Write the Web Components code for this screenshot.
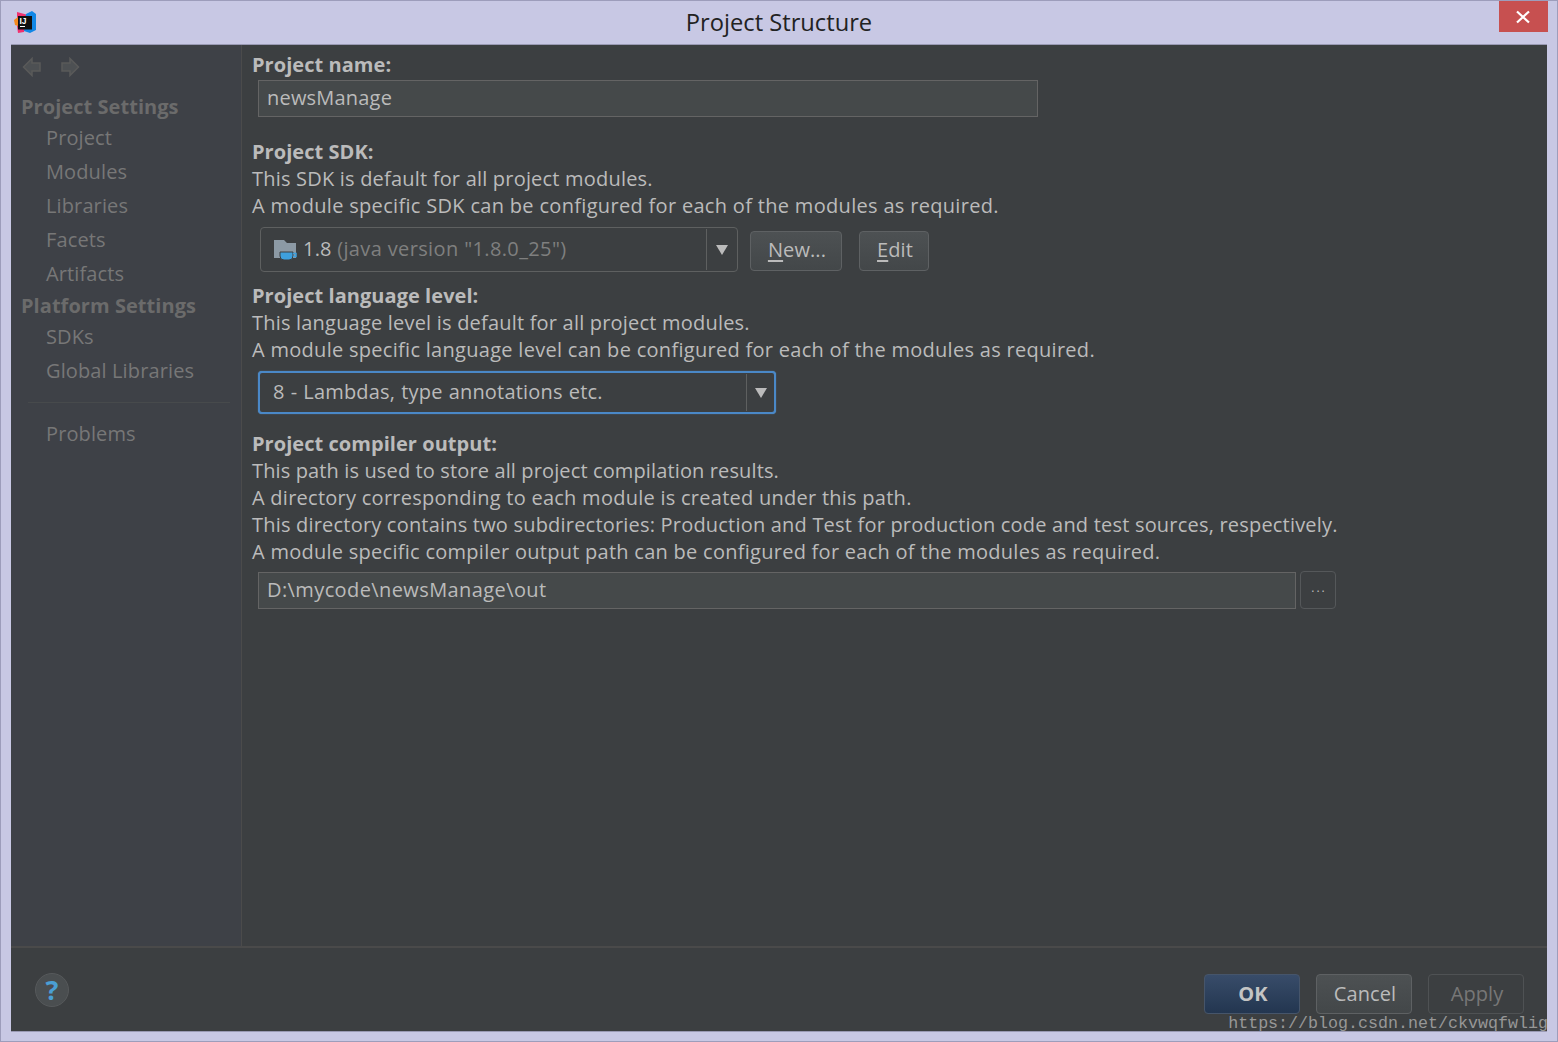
<!DOCTYPE html>
<html>
<head>
<meta charset="utf-8">
<title>Project Structure</title>
<style>
  html, body { margin: 0; height: 100%; background: #c8c8e4; overflow: hidden; }
  body { font: 20px/27px "Open Sans", "Noto Sans", sans-serif; color: #bbbbbb; }
</style>
</head>
<body>
<idea-window>
  <idea-sidebar slot="side"></idea-sidebar>
  <idea-section label="Project name:" slot="main" class="first">
    <idea-field value="newsManage" style="width:780px"></idea-field>
  </idea-section>
  <idea-section label="Project SDK:" slot="main" style="margin-top:21px">
    <div>This SDK is default for all project modules.</div>
    <div style="letter-spacing:.315px">A module specific SDK can be configured for each of the modules as required.</div>
    <idea-sdk-row></idea-sdk-row>
  </idea-section>
  <idea-section label="Project language level:" slot="main" style="margin-top:10px">
    <div>This language level is default for all project modules.</div>
    <div style="letter-spacing:.29px">A module specific language level can be configured for each of the modules as required.</div>
    <idea-combo focused style="margin:8px 0 0 6px;width:518px;height:43px;word-spacing:.6px">8 - Lambdas, type annotations etc.</idea-combo>
  </idea-section>
  <idea-section label="Project compiler output:" slot="main" style="margin-top:16px">
    <div style="letter-spacing:.13px">This path is used to store all project compilation results.</div>
    <div style="letter-spacing:.26px">A directory corresponding to each module is created under this path.</div>
    <div>This directory contains two subdirectories: Production and Test for production code and test sources, respectively.</div>
    <div style="letter-spacing:.27px">A module specific compiler output path can be configured for each of the modules as required.</div>
    <idea-path-row></idea-path-row>
  </idea-section>
</idea-window>

<script>
const FONT = '"Open Sans", "Noto Sans", sans-serif';

class IdeaWindow extends HTMLElement {
  constructor() {
    super();
    this.attachShadow({ mode: 'open' }).innerHTML = `
      <style>
        :host { display: flex; flex-direction: column; position: relative; box-sizing: border-box;
          width: 1558px; height: 1042px; background: #c8c8e4; border: 1px solid #9d9dbb; font-family: ${FONT}; }
        .title { display: flex; align-items: center; justify-content: center; height: 43px; flex: none;
          position: relative; font-size: 23.7px; color: #222; box-sizing: border-box; }
        .logo { position: absolute; left: 13px; top: 10px; }
        .close { position: absolute; right: 9px; top: 0; width: 49px; height: 31px; background: #c75050;
          display: flex; align-items: center; justify-content: center; padding-right: 2px; box-sizing: border-box; }
        .frame { flex: 1; display: flex; flex-direction: column; margin: 0 10px 9px 10px; background: #3c3f41;
          border: 1px solid #9a9ab4; border-width: 1px 0 1px 0; min-height: 0; }
        .body { flex: 1; display: flex; min-height: 0; }
        .main { flex: 1; padding: 6px 0 0 10px; min-width: 0; }
        .foot { height: 85px; flex: none; border-top: 2px solid #4a4a4a; box-sizing: border-box; display: flex;
          align-items: flex-start; padding: 26px 23px 0 24px; }
        .help { width: 34px; height: 34px; border-radius: 50%; background: #4a4e50; border: 1px solid #56595b;
          box-sizing: border-box; display: flex; align-items: center; justify-content: center; padding-bottom: 2px;
          color: #4a9fd4; font: bold 27px/1 "Open Sans", sans-serif; margin-top: -1px; }
        .spacer { flex: 1; }
        .btns { display: flex; gap: 16px; }
        .mark { position: absolute; right: 9px; bottom: 7px; font: 16.67px/20px "Liberation Mono", "DejaVu Sans Mono", monospace;
          color: #979797; white-space: nowrap; }
      </style>
      <div class="title">
        <svg class="logo" width="24" height="24" viewBox="0 0 24 24">
          <path d="M3 1l11 3-4 17-6 1-1-7z" fill="#f0316f"/>
          <path d="M0 9l4-3v9l-3-1z" fill="#f58a1f"/>
          <path d="M12 3l6-3 4 3v16l-6 3-6-2z" fill="#1187e6"/>
          <rect x="4" y="5" width="14" height="13.500" fill="#111"/>
          <rect x="6" y="15" width="5" height="1" fill="#fff"/>
          <text x="5.500" y="12.500" font-family="Liberation Sans, sans-serif" font-size="8.500" font-weight="700" fill="#fff">IJ</text>
        </svg>
        <span>Project Structure</span>
        <div class="close">
          <svg width="14" height="14" viewBox="0 0 14 14"><path d="M1 1.500l12 11M13 1.500l-12 11" stroke="#fff" stroke-width="2.200" fill="none"/></svg>
        </div>
      </div>
      <div class="frame">
        <div class="body">
          <slot name="side"></slot>
          <div class="main"><slot name="main"></slot></div>
        </div>
        <div class="foot">
          <div class="help">?</div>
          <div class="spacer"></div>
          <div class="btns">
            <idea-button variant="ok" style="width:96px;height:40px">OK</idea-button>
            <idea-button style="width:96px;height:40px">Cancel</idea-button>
            <idea-button variant="off" style="width:96px;height:40px">Apply</idea-button>
          </div>
        </div>
      </div>
      <div class="mark">https://blog.csdn.net/ckvwqfwlig</div>
    `;
  }
}

class IdeaSidebar extends HTMLElement {
  constructor() {
    super();
    const item = t => `<div class="item">${t}</div>`;
    this.attachShadow({ mode: 'open' }).innerHTML = `
      <style>
        :host { display: block; width: 231px; height: 100%; box-sizing: border-box; background: #3e4147;
          border-right: 1px solid #4b4b4b; color: #6e6e6e; font-family: ${FONT}; font-size: 20px; letter-spacing: .12px; }
        .nav { display: flex; gap: 18px; padding: 12px 0 0 11px; height: 36px; box-sizing: border-box; color: #565656; }
        .head { font-weight: 700; color: #6b6b6b; padding-left: 11px; height: 30px; line-height: 30px; letter-spacing: .05px; margin-left: -1px; }
        .head.one { margin-top: 10px; line-height: 32px; }
        .head.two { height: 29px; }
        .item { padding-left: 35px; height: 34px; line-height: 34px; color: #777777; }
        .rule { height: 1px; background: #474a4c; margin: 14px 11px 14px 17px; }
      </style>
      <div class="nav">
        <svg width="20" height="20" viewBox="0 0 20 20"><path d="M10 1.500L1.500 10 10 18.500V14h8V6h-8z" fill="#4d5053" stroke="#5a5a5a" stroke-width="1.500"/></svg>
        <svg width="20" height="20" viewBox="0 0 20 20"><path d="M10 1.500L18.500 10 10 18.500V14H2V6h8z" fill="#4d5053" stroke="#5a5a5a" stroke-width="1.500"/></svg>
      </div>
      <div class="head one">Project Settings</div>
      ${['Project', 'Modules', 'Libraries', 'Facets', 'Artifacts'].map(item).join('')}
      <div class="head two">Platform Settings</div>
      ${['SDKs', 'Global Libraries'].map(item).join('')}
      <div class="rule"></div>
      ${item('Problems')}
    `;
  }
}

class IdeaSection extends HTMLElement {
  constructor() {
    super();
    this.attachShadow({ mode: 'open' }).innerHTML = `
      <style>
        :host { display: block; font-size: 20px; line-height: 27px; color: #bbbbbb; white-space: nowrap;
          font-family: ${FONT}; letter-spacing: .2px; }
        .label { font-weight: 700; letter-spacing: .05px; }
      </style>
      <div class="label"></div>
      <slot></slot>
    `;
  }
  connectedCallback() {
    this.shadowRoot.querySelector('.label').textContent = this.getAttribute('label');
  }
}

class IdeaField extends HTMLElement {
  constructor() {
    super();
    this.attachShadow({ mode: 'open' }).innerHTML = `
      <style>
        :host { display: block; box-sizing: border-box; height: 37px; margin-left: 6px; margin-top: 2px;
          background: #45494a; border: 1px solid #646464; padding-left: 8px; line-height: 34px;
          font-size: 20px; color: #bbbbbb; font-family: ${FONT}; }
      </style>
      <span></span>
    `;
  }
  connectedCallback() {
    this.shadowRoot.querySelector('span').textContent = this.getAttribute('value');
  }
}

class IdeaCombo extends HTMLElement {
  constructor() {
    super();
    this.attachShadow({ mode: 'open' }).innerHTML = `
      <style>
        :host { display: flex; box-sizing: border-box; border: 1px solid #5e6060; border-radius: 4px;
          background: #3c3f41; font-family: ${FONT}; font-size: 20px; color: #bbbbbb; flex: none; }
        :host([focused]) { border: 2px solid #4a88c7; border-radius: 4px; box-shadow: 0 0 1px #5a9ad8; }
        .val { flex: 1; display: flex; align-items: center; gap: 5px; padding: 0 0 2px 13px; min-width: 0; }
        .arrow { width: 30px; flex: none; border-left: 1px solid #5e6060; margin: 1px 0; display: flex;
          align-items: center; justify-content: center; }
        :host([focused]) .arrow { width: 27px; }
        .arrow i { width: 0; height: 0; border: 6px solid transparent; border-top: 10px solid #bbbbbb; border-bottom: 0; }
      </style>
      <div class="val"><slot></slot></div>
      <div class="arrow"><i></i></div>
    `;
  }
}

class IdeaButton extends HTMLElement {
  constructor() {
    super();
    this.attachShadow({ mode: 'open' }).innerHTML = `
      <style>
        :host { display: flex; align-items: center; justify-content: center; box-sizing: border-box; flex: none;
          border: 1px solid #5e6163; border-radius: 4px; font-family: ${FONT}; font-size: 20px; color: #bbbbbb;
          background: linear-gradient(#4d5153, #434749); padding: 0 0 2px 2px; letter-spacing: .1px; }
        :host([variant=ok]) { background: linear-gradient(#384c69, #233650); border-color: #46556a; font-weight: 700; color: #c4c4c4; }
        :host([variant=off]) { background: none; border-color: #4f5254; color: #777777; }
        :host([variant=plain]) { background: none; border-color: #55585a; }
      </style>
      <slot></slot>
    `;
  }
}

class IdeaSdkRow extends HTMLElement {
  constructor() {
    super();
    this.attachShadow({ mode: 'open' }).innerHTML = `
      <style>
        :host { display: flex; align-items: center; margin: 8px 0 0 8px; font-family: ${FONT}; font-size: 20px; }
        .dim { color: #7f7f7f; letter-spacing: .37px; }
        u { text-underline-offset: 3px; }
        svg { flex: none; }
        idea-button { margin-top: 2px; }
      </style>
      <idea-combo style="width:478px;height:45px">
        <svg width="24" height="24" viewBox="0 0 24 24">
          <path d="M0 3h10l3 3h9v15H0z" fill="#8c9aa5"/>
          <path d="M6 15h13v4q0 4-4 4h-5q-4 0-4-4z" fill="#3ea0dd" stroke="#3c3f41" stroke-width="1"/>
          <path d="M19 16.500h3v3h-3" fill="none" stroke="#3ea0dd" stroke-width="1.500"/>
        </svg>
        <span>1.8 <span class="dim">(java version "1.8.0_25")</span></span>
      </idea-combo>
      <idea-button style="width:92px;height:40px;margin-left:12px"><span><u>N</u>ew...</span></idea-button>
      <idea-button style="width:70px;height:40px;margin-left:17px"><span><u>E</u>dit</span></idea-button>
    `;
  }
}

class IdeaPathRow extends HTMLElement {
  constructor() {
    super();
    this.attachShadow({ mode: 'open' }).innerHTML = `
      <style>
        :host { display: flex; align-items: center; gap: 4px; margin: 6px 0 0 0; }
        idea-field { width: 1038px; margin-top: 0; flex: none; letter-spacing: .4px; }
      </style>
      <idea-field value="D:\\mycode\\newsManage\\out"></idea-field>
      <idea-button variant="plain" style="width:36px;height:38px;font-size:12px;letter-spacing:2px;color:#bbbbbb;padding-bottom:6px">...</idea-button>
    `;
  }
}

customElements.define('idea-button', IdeaButton);
customElements.define('idea-field', IdeaField);
customElements.define('idea-combo', IdeaCombo);
customElements.define('idea-sdk-row', IdeaSdkRow);
customElements.define('idea-path-row', IdeaPathRow);
customElements.define('idea-section', IdeaSection);
customElements.define('idea-sidebar', IdeaSidebar);
customElements.define('idea-window', IdeaWindow);
</script>
</body>
</html>
